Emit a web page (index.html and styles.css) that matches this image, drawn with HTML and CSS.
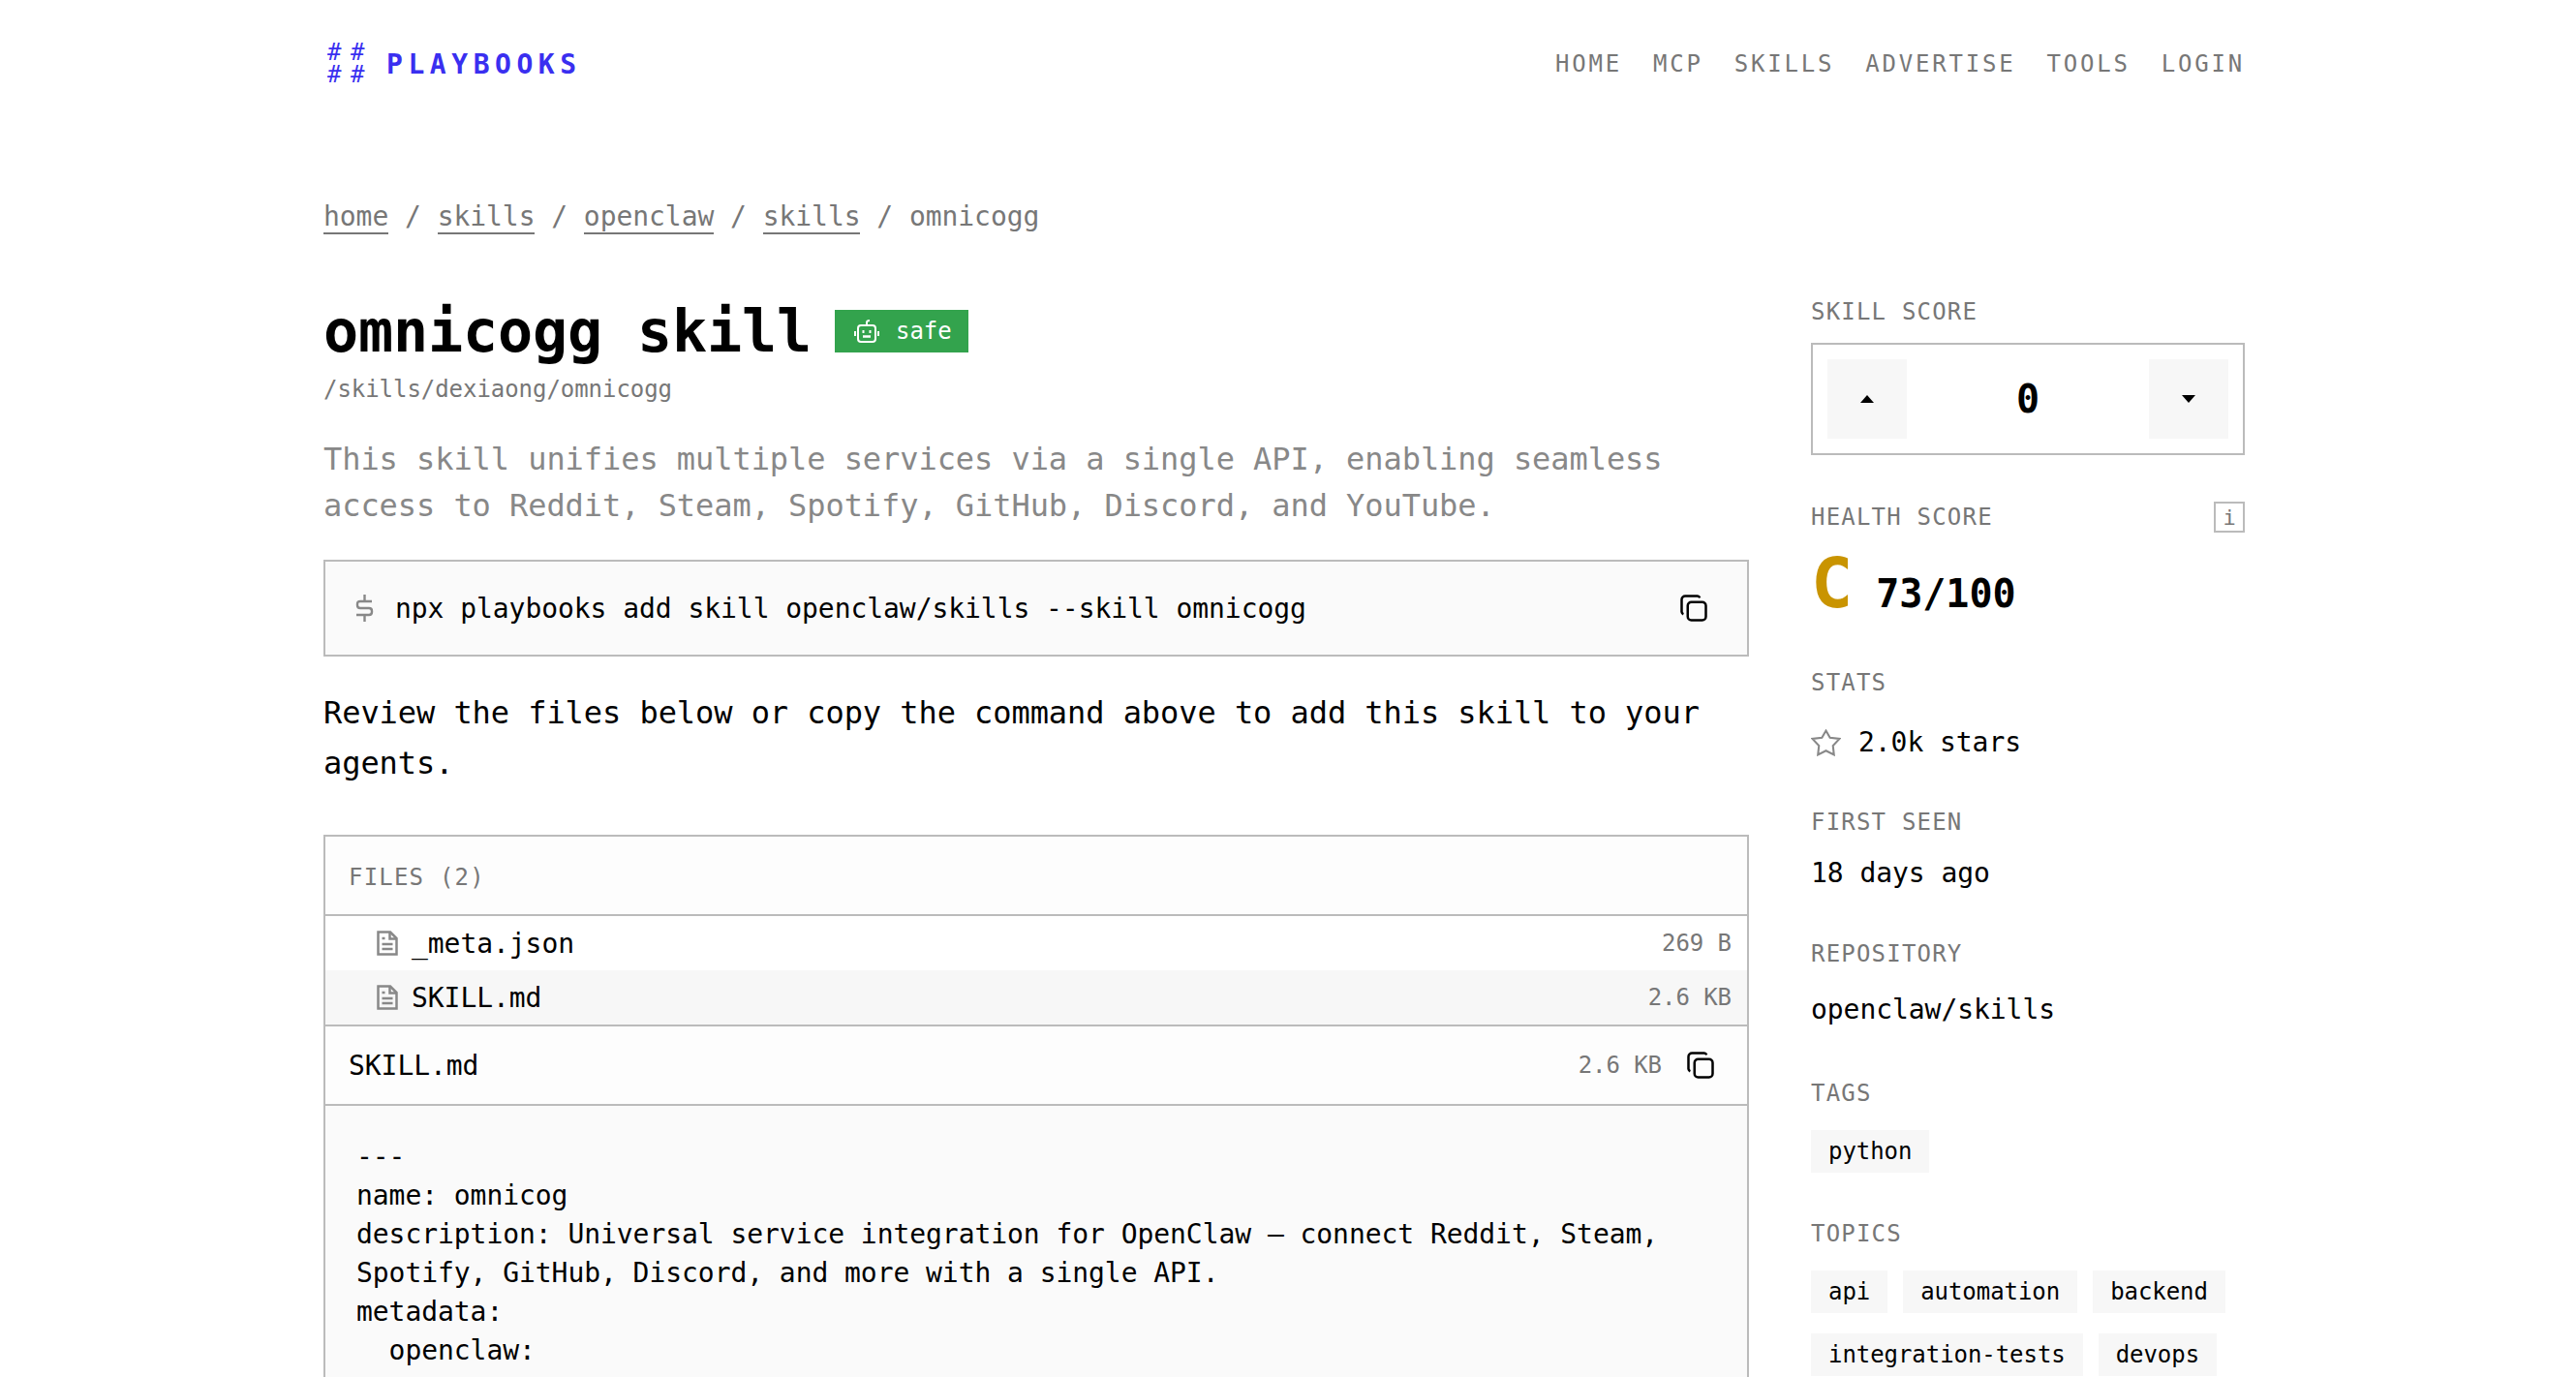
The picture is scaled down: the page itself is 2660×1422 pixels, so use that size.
FILE: index.html
```html
<!DOCTYPE html>
<html lang="en">
<head>
<meta charset="utf-8">
<title>omnicogg skill</title>
<link rel="stylesheet" href="styles.css">
</head>
<body>
<div class="page">
  <header class="topbar">
    <a class="brand">
      <span class="brand-mark"><span>#</span><span>#</span><span>#</span><span>#</span></span>
      <span class="brand-name">PLAYBOOKS</span>
    </a>
    <nav class="nav">
      <a>HOME</a><a>MCP</a><a>SKILLS</a><a>ADVERTISE</a><a>TOOLS</a><a>LOGIN</a>
    </nav>
  </header>
  <div class="crumbs"><a>home</a> / <a>skills</a> / <a>openclaw</a> / <a>skills</a> / omnicogg</div>
  <div class="layout">
    <main class="main">
      <div class="title-row">
        <h1>omnicogg skill</h1>
        <span class="badge">
          <svg class="badge-icon" viewBox="0 0 26 24" fill="none" stroke="currentColor" stroke-width="2"><path d="M13 6V3c0-1 1-2 3-2"/><rect x="4" y="6" width="18" height="17" rx="3"/><path d="M1 12v5M25 12v5M9.5 11v3M16.5 11v3"/><path d="M9 17.5h8" stroke-width="2.5"/></svg>
          <span>safe</span>
        </span>
      </div>
      <div class="path">/skills/dexiaong/omnicogg</div>
      <p class="desc">This skill unifies multiple services via a single API, enabling seamless access to Reddit, Steam, Spotify, GitHub, Discord, and YouTube.</p>
      <div class="command">
        <svg class="dollar" viewBox="0 0 19 28" fill="none" stroke="currentColor" stroke-width="2.4"><path d="M9.5 0v6M9.5 22v6"/><path d="M17 7H5Q2 7 2 10v1q0 3 3 3h9q3 0 3 3v1q0 3-3 3H1"/></svg>
        <code>npx playbooks add skill openclaw/skills --skill omnicogg</code>
        <svg class="copy" viewBox="0 0 24 24" fill="none" stroke="currentColor" stroke-width="2"><rect x="7" y="7" width="15" height="15" rx="3"/><path d="M17 3.5A2.5 2.5 0 0 0 15 2H5a3 3 0 0 0-3 3v10a2.5 2.5 0 0 0 1.5 2"/></svg>
      </div>
      <p class="lede">Review the files below or copy the command above to add this skill to your agents.</p>
      <section class="files">
        <div class="files-head">FILES (2)</div>
        <div class="file-row">
          <svg class="file-icon" viewBox="0 0 22 26" fill="none" stroke="currentColor" stroke-width="2.5"><path d="M1.5 1.5H14L20.5 8v16.5h-19z"/><path d="M13.5 1.5v7h7M5.5 8h3M5.5 14h11M5.5 19h11"/></svg>
          <span class="file-name">_meta.json</span><span class="size">269 B</span>
        </div>
        <div class="file-row active">
          <svg class="file-icon" viewBox="0 0 22 26" fill="none" stroke="currentColor" stroke-width="2.5"><path d="M1.5 1.5H14L20.5 8v16.5h-19z"/><path d="M13.5 1.5v7h7M5.5 8h3M5.5 14h11M5.5 19h11"/></svg>
          <span class="file-name">SKILL.md</span><span class="size">2.6 KB</span>
        </div>
        <div class="viewer-head">
          <span class="file-name">SKILL.md</span><span class="size">2.6 KB</span>
          <svg class="copy" viewBox="0 0 24 24" fill="none" stroke="currentColor" stroke-width="2"><rect x="7" y="7" width="15" height="15" rx="3"/><path d="M17 3.5A2.5 2.5 0 0 0 15 2H5a3 3 0 0 0-3 3v10a2.5 2.5 0 0 0 1.5 2"/></svg>
        </div>
        <pre class="source">---
name: omnicog
description: Universal service integration for OpenClaw — connect Reddit, Steam,
Spotify, GitHub, Discord, and more with a single API.
metadata:
  openclaw:</pre>
      </section>
    </main>
    <aside class="side">
      <section class="block block-score">
        <h2 class="label">SKILL SCORE</h2>
        <div class="score">
          <button class="vote"><span class="tri up"></span></button>
          <span class="score-num">0</span>
          <button class="vote"><span class="tri down"></span></button>
        </div>
      </section>
      <section class="block block-health">
        <div class="label-row"><h2 class="label">HEALTH SCORE</h2><span class="info">i</span></div>
        <div class="health"><span class="grade">C</span><span class="health-num">73/100</span></div>
      </section>
      <section class="block block-stats">
        <h2 class="label">STATS</h2>
        <div class="stars">
          <svg class="star" viewBox="0 0 30 27" fill="none" stroke="currentColor" stroke-width="2"><path d="M15 1.5l4 7 9.5 1-6.5 7 1 9-8-4-8 4 1-9-6.5-7 9.5-1z"/></svg>
          <span>2.0k stars</span>
        </div>
      </section>
      <section class="block block-seen">
        <h2 class="label">FIRST SEEN</h2>
        <div class="value">18 days ago</div>
      </section>
      <section class="block block-repo">
        <h2 class="label">REPOSITORY</h2>
        <div class="value">openclaw/skills</div>
      </section>
      <section class="block block-tags">
        <h2 class="label">TAGS</h2>
        <div class="tags"><span class="tag">python</span></div>
      </section>
      <section class="block">
        <h2 class="label">TOPICS</h2>
        <div class="tags"><span class="tag">api</span><span class="tag">automation</span><span class="tag">backend</span><span class="tag">integration-tests</span><span class="tag">devops</span></div>
      </section>
    </aside>
  </div>
</div>
</body>
</html>
```
FILE: styles.css
```css
* { box-sizing: border-box; }
html, body { margin: 0; height: 100%; overflow: hidden; background: #fff; }
body { font-family: "DejaVu Sans Mono", "Liberation Mono", monospace; color: #000; font-size: 28px; letter-spacing: -0.056px; }
.page { height: 1422px; overflow: hidden; padding: 0 342px 0 334px; }
.topbar { display: flex; justify-content: space-between; align-items: center; height: 132px; }
.brand { display: flex; align-items: center; gap: 13px; color: #3a2ff0; }
.brand-mark { display: grid; grid-template-columns: 24px 24px; grid-auto-rows: 23px; font-size: 24px; line-height: 23px; margin-left: 4px; }
.brand-name { font-size: 28px; font-weight: 700; letter-spacing: 5.55px; }
.nav { display: flex; gap: 32px; font-size: 24px; letter-spacing: 2.8px; color: #777; }
.crumbs { margin-top: 74px; line-height: 36px; color: #777; font-size: 28px; }
.crumbs a { border-bottom: 2px solid #777; }
.layout { display: grid; grid-template-columns: 1472px 448px; column-gap: 64px; margin-top: 64px; }
.title-row { display: flex; align-items: center; gap: 24px; height: 72px; }
h1 { margin: 0; font-size: 60px; font-weight: 700; line-height: 72px; letter-spacing: -0.12px; }
.badge { display: flex; align-items: center; gap: 17px; width: 138px; height: 44px; padding-left: 20px; background: #33a34d; color: #fff; font-size: 24px; }
.badge-icon { width: 26px; height: 24px; }
.path { font-size: 24px; color: #777; line-height: 36px; margin-top: 6px; letter-spacing: -0.05px; }
.desc { margin: 30px 0 0; font-size: 32px; line-height: 48px; color: #888; letter-spacing: -0.064px; }
.command { display: flex; align-items: center; margin-top: 32px; height: 100px; padding: 0 40px 0 31px; border: 2px solid #bbb; background: #fafafa; }
.command code { flex: 1; font: inherit; margin-left: 22px; }
.dollar { width: 19px; height: 28px; color: #888; }
.copy { width: 30px; height: 30px; color: #000; }
.lede { margin: 32px 0 0; font-size: 32px; line-height: 52px; letter-spacing: -0.064px; }
.files { margin-top: 48px; border: 2px solid #bbb; background: #fff; }
.files-head { height: 82px; display: flex; align-items: center; padding: 4px 0 0 24px; font-size: 24px; letter-spacing: 1.2px; color: #777; background: #fdfdfd; border-bottom: 2px solid #bbb; }
.file-row { display: flex; align-items: center; height: 56px; padding: 0 16px 0 53px; }
.file-row.active { background: #f7f7f7; }
.file-icon { width: 22px; height: 26px; color: #888; margin-right: 14px; }
.file-name { flex: 1; }
.size { font-size: 24px; color: #777; }
.viewer-head { display: flex; align-items: center; height: 84px; padding: 0 33px 0 24px; border-top: 2px solid #bbb; border-bottom: 2px solid #bbb; background: #fdfdfd; }
.viewer-head .copy { margin-left: 25px; }
.source { margin: 0; padding: 33px 32px 34px; background: #fafafa; font: inherit; line-height: 40px; white-space: pre; }
.label { margin: 0; font-size: 24px; font-weight: 400; letter-spacing: 1.2px; color: #777; line-height: 32px; }
.block { margin-bottom: 47px; }
.block-score { margin-bottom: 48px; }
.block-health { margin-bottom: 34px; }
.block-stats { margin-bottom: 46px; }
.block-repo { margin-bottom: 50px; }
.score { display: flex; align-items: center; justify-content: space-between; height: 116px; margin-top: 16px; padding: 0 15px; border: 2px solid #bbb; }
.vote { width: 82px; height: 82px; border: 0; background: #f7f7f7; display: flex; align-items: center; justify-content: center; padding: 0; }
.tri { width: 0; height: 0; border-left: 7px solid transparent; border-right: 7px solid transparent; }
.tri.up { border-bottom: 8px solid #000; }
.tri.down { border-top: 8px solid #000; }
.score-num { font-size: 40px; font-weight: 700; }
.label-row { display: flex; justify-content: space-between; align-items: center; }
.info { width: 32px; height: 32px; border: 2px solid #bbb; font-size: 22px; color: #777; display: flex; align-items: center; justify-content: center; }
.health { display: flex; align-items: baseline; gap: 24px; margin-top: 10px; line-height: 84px; }
.grade { font-size: 72px; font-weight: 700; color: #c99400; line-height: 84px; }
.health-num { font-size: 40px; font-weight: 700; }
.stars { display: flex; align-items: center; gap: 18px; margin-top: 26px; line-height: 40px; }
.star { width: 31px; height: 28px; color: #888; }
.value { line-height: 40px; }
.block-seen .value { margin-top: 17px; }
.block-repo .value { margin-top: 22px; }
.tags { display: flex; flex-wrap: wrap; gap: 21px 16px; margin-top: 22px; }
.tag { background: #f7f7f7; font-size: 24px; line-height: 44px; padding: 0 18px; }
```
